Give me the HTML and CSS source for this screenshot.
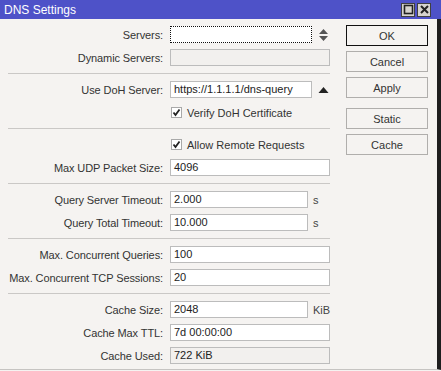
FILE: index.html
```html
<!DOCTYPE html>
<html lang="en">
<head>
  <meta charset="UTF-8" />
  <title>DNS Settings</title>
  <link rel="stylesheet" href="styles.css">
</head>
<body>
  <div class="window">
    <div class="titlebar">
      <span class="title">DNS Settings</span>
      <div class="tb-buttons">
        <span class="tb-btn">
          <svg width="11" height="11" viewBox="0 0 11 11"><rect x="1.5" y="1.5" width="8" height="8" fill="none" stroke="#222" stroke-width="1.6"/></svg>
        </span>
        <span class="tb-btn">
          <svg width="11" height="11" viewBox="0 0 11 11"><path d="M2 2 L9 9 M9 2 L2 9" stroke="#222" stroke-width="2"/></svg>
        </span>
      </div>
    </div>

    <div class="content">
      <div class="form">
        <div class="row">
          <label class="label">Servers:</label>
          <div class="field short focused"></div>
          <svg class="icon" width="11" height="12" viewBox="0 0 11 12"><path d="M5.5 0 L10 5 L1 5 Z M1 7 L10 7 L5.5 12 Z" fill="#555"/></svg>
        </div>
        <div class="row">
          <label class="label">Dynamic Servers:</label>
          <div class="field disabled"></div>
        </div>

        <div class="sep"></div>

        <div class="row">
          <label class="label">Use DoH Server:</label>
          <div class="field short">https://1.1.1.1/dns-query</div>
          <svg class="icon" width="11" height="6" viewBox="0 0 11 6"><path d="M5.5 0 L10.5 6 L0.5 6 Z" fill="#222"/></svg>
        </div>
        <div class="row">
          <div class="check">
            <svg width="11" height="11" viewBox="0 0 11 11"><rect x="0.5" y="0.5" width="10" height="10" fill="#fff" stroke="#a9a9a9"/><path d="M2.5 5.5 L4.5 8 L8.5 2.5" fill="none" stroke="#222" stroke-width="1.8"/></svg>
            <span>Verify DoH Certificate</span>
          </div>
        </div>

        <div class="sep"></div>

        <div class="row">
          <div class="check">
            <svg width="11" height="11" viewBox="0 0 11 11"><rect x="0.5" y="0.5" width="10" height="10" fill="#fff" stroke="#a9a9a9"/><path d="M2.5 5.5 L4.5 8 L8.5 2.5" fill="none" stroke="#222" stroke-width="1.8"/></svg>
            <span>Allow Remote Requests</span>
          </div>
        </div>
        <div class="row">
          <label class="label">Max UDP Packet Size:</label>
          <div class="field">4096</div>
        </div>

        <div class="sep"></div>

        <div class="row">
          <label class="label">Query Server Timeout:</label>
          <div class="field unit">2.000</div>
          <span class="unit-text">s</span>
        </div>
        <div class="row">
          <label class="label">Query Total Timeout:</label>
          <div class="field unit">10.000</div>
          <span class="unit-text">s</span>
        </div>

        <div class="sep"></div>

        <div class="row">
          <label class="label">Max. Concurrent Queries:</label>
          <div class="field">100</div>
        </div>
        <div class="row">
          <label class="label">Max. Concurrent TCP Sessions:</label>
          <div class="field">20</div>
        </div>

        <div class="sep"></div>

        <div class="row">
          <label class="label">Cache Size:</label>
          <div class="field unit">2048</div>
          <span class="unit-text">KiB</span>
        </div>
        <div class="row">
          <label class="label">Cache Max TTL:</label>
          <div class="field">7d 00:00:00</div>
        </div>
        <div class="row">
          <label class="label">Cache Used:</label>
          <div class="field disabled">722 KiB</div>
        </div>
      </div>

      <div class="buttons">
        <button class="btn default">OK</button>
        <button class="btn">Cancel</button>
        <button class="btn">Apply</button>
        <button class="btn spaced">Static</button>
        <button class="btn">Cache</button>
      </div>
    </div>
  </div>
</body>
</html>
```

FILE: styles.css
```css
/* Base */
* { box-sizing: border-box; margin: 0; padding: 0; }
body { width: 441px; height: 371px; overflow: hidden; font-family: 'Liberation Sans', Arial, sans-serif; font-size: 11px; color: #333; background: #f5f3f1; }
.window { display: flex; flex-direction: column; height: 371px; }

/* Title bar */
.titlebar { height: 19px; background: #4e52c8; color: #fff; display: flex; align-items: center; justify-content: space-between; padding: 0 10px 0 4px; }
.title { font-size: 12px; }
.tb-buttons { display: flex; gap: 2px; }
.tb-btn { width: 14px; height: 14px; background: #d6d3ce; border: 1px solid #404040; display: flex; align-items: center; justify-content: center; }

/* Content */
.content { flex: 1; display: flex; border-right: 4px solid #1e1e1e; border-bottom: 1px solid #c6c4c2; margin-bottom: 1px; }
.form { width: 330px; padding-top: 7px; display: flex; flex-direction: column; gap: 6px; }
.row { height: 17px; display: flex; align-items: center; }
.label { width: 163px; margin-right: 7px; text-align: right; letter-spacing: -0.1px; white-space: nowrap; }
.field { width: 160px; height: 17px; background: #fff; border: 1px solid #bcbcbc; color: #222; padding: 0 3px; line-height: 15px; white-space: nowrap; overflow: hidden; }
.field.short { width: 142px; }
.field.unit { width: 138px; }
.field.disabled { background: #f2f0ee; }
.field.focused { border: 1px dotted #111; }
.icon { margin-left: 6px; }
.unit-text { margin-left: 5px; color: #444; }
.sep { height: 1px; background: #cac8c6; margin: 1px 0 1px 8px; }
.check { margin-left: 171px; display: flex; align-items: center; gap: 5px; }
.check svg { display: block; }

/* Buttons */
.buttons { width: 82px; margin-left: 16px; padding-top: 6px; display: flex; flex-direction: column; gap: 5px; }
.btn { height: 21px; background: #f5f3f1; border: 1px solid #b0aeac; font-family: inherit; font-size: 11px; color: #333; }
.btn.default { border-color: #111; }
.btn.spaced { margin-top: 5px; }
```
